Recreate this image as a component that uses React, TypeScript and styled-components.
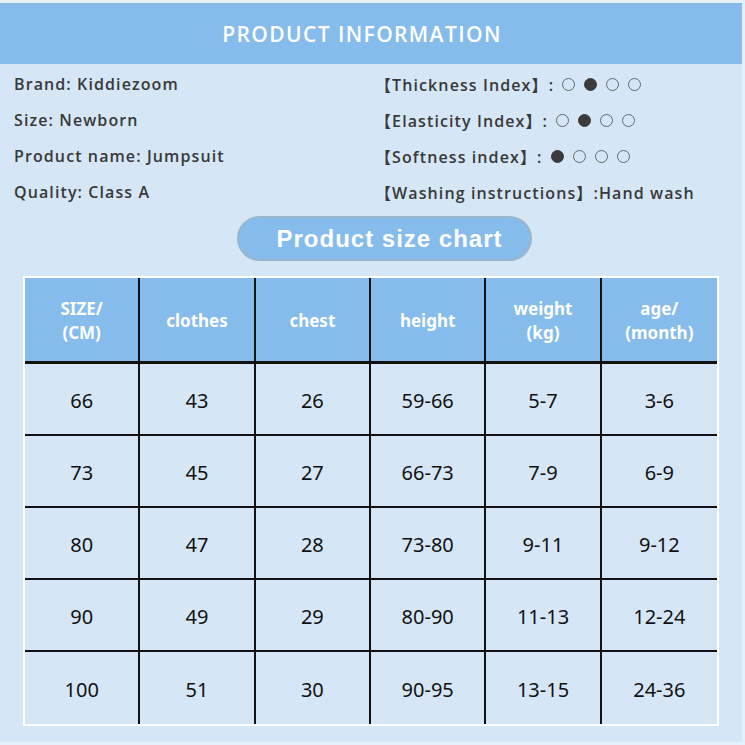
import React from "react";
import styled, { createGlobalStyle } from "styled-components";

const Global = createGlobalStyle`
  html, body { margin: 0; padding: 0; background: #e6f0fa; }
  #root { width: 745px; height: 745px; }
`;

const Page = styled.div`
  width: 742px;
  height: 739px;
  margin-top: 3px;
  background: #d5e7f7;
  display: flex;
  flex-direction: column;
  font-family: "Noto Sans", "Noto Sans CJK SC", sans-serif;
`;

const Banner = styled.div`
  height: 61px;
  background: #85bcec;
  display: flex;
  align-items: center;
  justify-content: center;
  padding-right: 18px;
  color: #ffffff;
  font-family: "Open Sans", "Noto Sans", sans-serif;
  font-size: 21px;
  font-weight: 600;
  letter-spacing: 1.4px;
`;

const InfoGrid = styled.div`
  display: grid;
  grid-template-columns: 361px 1fr;
  grid-auto-rows: 36px;
  padding: 2px 0 0 14px;
`;

const InfoItem = styled.div`
  display: flex;
  align-items: center;
  color: #383838;
  font-family: "Open Sans", "Noto Sans", "Noto Sans CJK SC", sans-serif;
  font-size: 16px;
  font-weight: 600;
  letter-spacing: 1.1px;
  white-space: nowrap;
`;

const Dots = styled.span`
  display: inline-flex;
  gap: 9px;
  margin-left: 8px;
`;

const Dot = styled.span<{ $on?: boolean }>`
  width: 13px;
  height: 13px;
  border-radius: 50%;
  box-sizing: border-box;
  border: 1px solid ${(p) => (p.$on ? "#3b3b3b" : "#666")};
  background: ${(p) => (p.$on ? "#3b3b3b" : "transparent")};
`;

const PillRow = styled.div`
  display: flex;
  padding: 6px 0 0 237px;
`;

const Pill = styled.div`
  width: 295px;
  height: 45px;
  box-sizing: border-box;
  border: 2px solid #9bb6cc;
  border-radius: 23px;
  background: #85bcec;
  display: flex;
  align-items: center;
  justify-content: center;
  padding-left: 10px;
  color: #ffffff;
  font-family: "Liberation Sans", Arial, sans-serif;
  font-weight: 700;
  font-size: 24px;
  letter-spacing: 1px;
`;

const Table = styled.div`
  margin: 15px 0 0 23px;
  width: 696px;
  box-sizing: border-box;
  border: 2px solid #ffffff;
  display: grid;
  grid-template-columns: repeat(6, 1fr);
  grid-template-rows: 86px repeat(5, 72px);
`;

const Cell = styled.div<{ $head?: boolean; $lastCol?: boolean; $lastRow?: boolean }>`
  display: flex;
  align-items: center;
  justify-content: center;
  text-align: center;
  padding-top: 3px;
  background: ${(p) => (p.$head ? "#85bcec" : "#d5e7f7")};
  color: ${(p) => (p.$head ? "#ffffff" : "#111111")};
  font-size: ${(p) => (p.$head ? "17px" : "20px")};
  font-weight: ${(p) => (p.$head ? 700 : 400)};
  line-height: ${(p) => (p.$head ? "24px" : "28px")};
  border-right: ${(p) => (p.$lastCol ? "none" : "2px solid #111")};
  border-bottom: ${(p) => (p.$lastRow ? "none" : p.$head ? "3px solid #111" : "2px solid #111")};
`;

const headers = [["SIZE/", "(CM)"], ["clothes"], ["chest"], ["height"], ["weight", "(kg)"], ["age/", "(month)"]];
const rows = [
  ["66", "43", "26", "59-66", "5-7", "3-6"],
  ["73", "45", "27", "66-73", "7-9", "6-9"],
  ["80", "47", "28", "73-80", "9-11", "9-12"],
  ["90", "49", "29", "80-90", "11-13", "12-24"],
  ["100", "51", "30", "90-95", "13-15", "24-36"],
];

const dots = (on: number) => (
  <Dots>
    {[0, 1, 2, 3].map((i) => (
      <Dot key={i} $on={i === on} />
    ))}
  </Dots>
);

export default function App() {
  return (
    <>
      <Global />
      <Page>
        <Banner>PRODUCT INFORMATION</Banner>
        <InfoGrid>
          <InfoItem>Brand: Kiddiezoom</InfoItem>
          <InfoItem>【Thickness Index】:{dots(1)}</InfoItem>
          <InfoItem>Size: Newborn</InfoItem>
          <InfoItem>【Elasticity Index】:{dots(1)}</InfoItem>
          <InfoItem>Product name: Jumpsuit</InfoItem>
          <InfoItem>【Softness index】:{dots(0)}</InfoItem>
          <InfoItem>Quality: Class A</InfoItem>
          <InfoItem>【Washing instructions】:Hand wash</InfoItem>
        </InfoGrid>
        <PillRow>
          <Pill>Product size chart</Pill>
        </PillRow>
        <Table>
          {headers.map((h, i) => (
            <Cell key={"h" + i} $head $lastCol={i === 5}>
              {h.length > 1 ? (
                <span>
                  {h[0]}
                  <br />
                  {h[1]}
                </span>
              ) : (
                h[0]
              )}
            </Cell>
          ))}
          {rows.map((r, ri) =>
            r.map((v, ci) => (
              <Cell key={ri + "-" + ci} $lastCol={ci === 5} $lastRow={ri === rows.length - 1}>
                {v}
              </Cell>
            ))
          )}
        </Table>
      </Page>
    </>
  );
}
